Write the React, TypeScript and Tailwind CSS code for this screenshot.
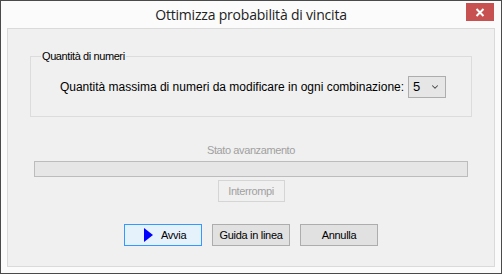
import { ChevronDown } from 'lucide-react'

export default function App() {
  return (
    <div className="w-[502px] h-[274px] bg-[#fbfbfb] border border-[#4a4a4a] flex flex-col font-['Liberation_Sans',Arial,sans-serif] text-black">
      {/* title bar */}
      <div className="h-[27px] flex items-center relative shrink-0">
        <div className="flex-1 text-center text-[14px] tracking-[-0.2px] text-[#222] font-['Open_Sans',sans-serif] leading-none">
          Ottimizza probabilità di vincita
        </div>
        <button className="absolute right-[7px] top-[2px] w-[28px] h-[18px] bg-[#c75050] flex items-center justify-center">
          <svg width="10" height="9" viewBox="0 0 10 9">
            <path d="M1.5 1 L8.5 8 M8.5 1 L1.5 8" stroke="white" strokeWidth="2" />
          </svg>
        </button>
      </div>

      {/* client area */}
      <div className="flex-1 mx-[6px] mb-[6px] bg-[#f0f0f0] border border-[#dadada] flex flex-col">
        <fieldset className="mx-[22px] mt-[22px] h-[66px] border border-[#dcdcdc] px-[10px]">
          <legend className="text-[11px] tracking-[-0.4px] px-[1px] leading-none">Quantità di numeri</legend>
          <div className="flex items-center justify-center gap-[4px] mt-[14px] pl-[4px]">
            <span className="text-[12px] whitespace-nowrap">Quantità massima di numeri da modificare in ogni combinazione:</span>
            <div className="w-[38px] h-[22px] bg-[#e6e6e6] border border-[#adadad] flex items-center justify-between pl-[4px] pr-[5px] text-[13px]">
              <span>5</span>
              <ChevronDown size={10} strokeWidth={2.5} className="text-[#444]" />
            </div>
          </div>
        </fieldset>

        <div className="mt-[28px] text-center text-[11px] tracking-[-0.4px] text-[#a0a0a0] leading-none">Stato avanzamento</div>
        <div className="mx-[26px] mt-[5px] h-[16px] bg-[#e6e6e6] border border-[#bcbcbc]" />
        <div className="flex justify-center mt-[3px]">
          <button className="w-[67px] h-[22px] border border-[#d5d5d5] bg-[#f0f0f0] text-[11px] tracking-[-0.4px] text-[#a0a0a0]">
            Interrompi
          </button>
        </div>

        <div className="flex justify-center gap-[10px] mt-[22px] text-[11px] tracking-[-0.3px]">
          <button className="w-[78px] h-[22px] border border-[#3399ff] bg-[#e5f1fb] flex items-center">
            <svg width="9" height="14" viewBox="0 0 9 14" className="ml-[19px]">
              <path d="M0 0 L9 7 L0 14 Z" fill="#0000ff" />
            </svg>
            <span className="ml-[8px]">Avvia</span>
          </button>
          <button className="w-[78px] h-[22px] border border-[#adadad] bg-[#e1e1e1]">Guida in linea</button>
          <button className="w-[78px] h-[22px] border border-[#adadad] bg-[#e1e1e1]">Annulla</button>
        </div>
      </div>
    </div>
  )
}
